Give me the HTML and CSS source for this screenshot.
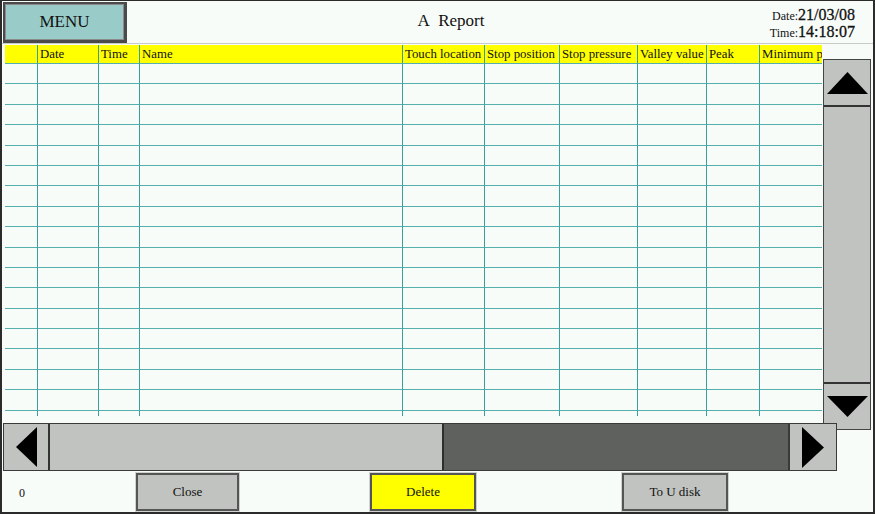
FILE: index.html
```html
<!DOCTYPE html>
<html lang="en">
<head>
    <meta charset="UTF-8">
    <title>A Report</title>

    <link rel="stylesheet" href="styles.css">
</head>
<body>
<div class="screen">
    <header class="top">
        <button class="menu">MENU</button>
        <div class="title">A&nbsp; Report</div>
        <div class="clock">
            <div><span class="lbl">Date:</span>21/03/08</div>
            <div><span class="lbl">Time:</span>14:18:07</div>
        </div>
    </header>

    <div class="middle">
        <div class="grid-wrap">
            <table class="report">
                <colgroup>
                    <col style="width:33px">
                    <col style="width:61px">
                    <col style="width:41px">
                    <col style="width:263px">
                    <col style="width:82px">
                    <col style="width:75px">
                    <col style="width:78px">
                    <col style="width:69px">
                    <col style="width:53px">
                    <col style="width:140px">
                </colgroup>
                <thead>
                <tr>
                    <th></th><th>Date</th><th>Time</th><th>Name</th><th>Touch location</th>
                    <th>Stop position</th><th>Stop pressure</th><th>Valley value</th><th>Peak</th>
                    <th>Minimum pressure</th>
                </tr>
                </thead>
                <tbody>
                <tr><td></td><td></td><td></td><td></td><td></td><td></td><td></td><td></td><td></td><td></td></tr>
                <tr><td></td><td></td><td></td><td></td><td></td><td></td><td></td><td></td><td></td><td></td></tr>
                <tr><td></td><td></td><td></td><td></td><td></td><td></td><td></td><td></td><td></td><td></td></tr>
                <tr><td></td><td></td><td></td><td></td><td></td><td></td><td></td><td></td><td></td><td></td></tr>
                <tr><td></td><td></td><td></td><td></td><td></td><td></td><td></td><td></td><td></td><td></td></tr>
                <tr><td></td><td></td><td></td><td></td><td></td><td></td><td></td><td></td><td></td><td></td></tr>
                <tr><td></td><td></td><td></td><td></td><td></td><td></td><td></td><td></td><td></td><td></td></tr>
                <tr><td></td><td></td><td></td><td></td><td></td><td></td><td></td><td></td><td></td><td></td></tr>
                <tr><td></td><td></td><td></td><td></td><td></td><td></td><td></td><td></td><td></td><td></td></tr>
                <tr><td></td><td></td><td></td><td></td><td></td><td></td><td></td><td></td><td></td><td></td></tr>
                <tr><td></td><td></td><td></td><td></td><td></td><td></td><td></td><td></td><td></td><td></td></tr>
                <tr><td></td><td></td><td></td><td></td><td></td><td></td><td></td><td></td><td></td><td></td></tr>
                <tr><td></td><td></td><td></td><td></td><td></td><td></td><td></td><td></td><td></td><td></td></tr>
                <tr><td></td><td></td><td></td><td></td><td></td><td></td><td></td><td></td><td></td><td></td></tr>
                <tr><td></td><td></td><td></td><td></td><td></td><td></td><td></td><td></td><td></td><td></td></tr>
                <tr><td></td><td></td><td></td><td></td><td></td><td></td><td></td><td></td><td></td><td></td></tr>
                <tr><td></td><td></td><td></td><td></td><td></td><td></td><td></td><td></td><td></td><td></td></tr>
                <tr><td></td><td></td><td></td><td></td><td></td><td></td><td></td><td></td><td></td><td></td></tr>
                </tbody>
            </table>
        </div>

        <div class="vscroll">
            <div class="sbtn up">
                <svg width="41" height="22" viewBox="0 0 41 22"><polygon points="20.5,0 41,22 0,22"/></svg>
            </div>
            <div class="vtrack"></div>
            <div class="sbtn down">
                <svg width="41" height="21" viewBox="0 0 41 21"><polygon points="0,0 41,0 20.5,21"/></svg>
            </div>
        </div>
    </div>

    <div class="hscroll">
        <div class="sbtn left">
            <svg width="21" height="40" viewBox="0 0 21 40"><polygon points="21,0 21,40 0,20"/></svg>
        </div>
        <div class="thumb"></div>
        <div class="htrack"></div>
        <div class="sbtn right">
            <svg width="22" height="41" viewBox="0 0 22 41"><polygon points="0,0 22,20.5 0,41"/></svg>
        </div>
    </div>

    <footer class="bottom">
        <span class="count">0</span>
        <button class="key close">Close</button>
        <button class="key delete">Delete</button>
        <button class="key export">To U disk</button>
    </footer>
</div>
</body>
</html>
```

FILE: styles.css
```css
body {
    margin: 0;
    background: #f8fcf9;
    font-family: "Liberation Serif", "Times New Roman", serif;
    color: #111;
}

.screen {
    width: 875px;
    height: 514px;
    box-sizing: border-box;
    border-style: solid;
    border-color: #2b2b2b;
    border-width: 1px 2px 2px 2px;
    background: #f8fcf9;
    overflow: hidden;
}

/*Шапка*/

.top {
    display: flex;
    height: 42px;
    border-bottom: 1px solid #c9cbc9;
}

.menu {
    width: 124px;
    height: 41px;
    margin: 1px 0 0 1px;
    padding: 0;
    background: #99ccc8;
    border: 2px solid #4b4b4b;
    border-right-width: 3px;
    border-bottom-width: 3px;
    box-shadow: inset 0 0 0 1px #8a8a8a;
    font-family: inherit;
    font-size: 17px;
    color: #111;
}

.title {
    flex: 1;
    text-align: center;
    font-size: 17px;
    line-height: 40px;
    padding-left: 5px;
}

.clock {
    padding: 6px 18px 0 0;
    text-align: right;
    font-size: 16px;
    line-height: 16px;
    -webkit-text-stroke: 0.3px #111;
}

.lbl {
    font-size: 12px;
    -webkit-text-stroke: 0;
}

/*Таблица*/

.middle {
    display: flex;
    height: 386px;
}

.grid-wrap {
    width: 817px;
    height: 371px;
    margin: 1px 0 0 3px;
    overflow: hidden;
}

.report {
    table-layout: fixed;
    width: 895px;
    border-spacing: 0;
}

.report th, .report td {
    box-sizing: border-box;
    padding: 0 0 0 2px;
    border-right: 1px solid #3a9e9b;
    border-bottom: 1px solid #55b0ad;
    white-space: nowrap;
    overflow: hidden;
    text-align: left;
}

.report th {
    height: 19px;
    padding-top: 1px;
    background: #ffff00;
    font-weight: normal;
    font-size: 12.8px;
    line-height: 17px;
}

.report td {
    height: 20.4px;
}

/*Прокрутка*/

.sbtn {
    display: flex;
    align-items: center;
    justify-content: center;
    background: #c0c3bf;
}

.sbtn svg {
    fill: #000;
}

.vscroll {
    display: flex;
    flex-direction: column;
    width: 48px;
    height: 371px;
    box-sizing: border-box;
    margin: 15px 0 0 1px;
    border: 1px solid #444;
    background: #c0c3bf;
}

.up, .down {
    height: 45px;
}

.up {
    border-bottom: 2px solid #333;
}

.down {
    border-top: 2px solid #333;
}

.vtrack {
    flex: 1;
}

.hscroll {
    position: relative;
    display: flex;
    width: 834px;
    height: 48px;
    box-sizing: border-box;
    margin: -7px 0 0 1px;
    border: 1px solid #3a3a3a;
}

.left {
    width: 44px;
    border-right: 2px solid #333;
}

.thumb {
    width: 392px;
    background: #c0c3bf;
    border-right: 2px solid #2e2e2e;
}

.htrack {
    flex: 1;
    background: #5f615e;
}

.right {
    width: 46px;
    border-left: 2px solid #3a3a3a;
}

/*Кнопки*/

.bottom {
    display: flex;
    align-items: center;
    height: 41px;
}

.count {
    width: 134px;
    padding-left: 17px;
    box-sizing: border-box;
    font-size: 12px;
    margin-top: 4px;
    color: #111;
}

.key {
    height: 38px;
    padding: 0;
    border: 2px solid #555;
    box-shadow: 0 0 0 1px #cfd1cf;
    background: #c0c3bf;
    font-family: inherit;
    font-size: 13px;
    color: #111;
}

.close {
    width: 103px;
}

.delete {
    width: 106px;
    margin-left: 131px;
    background: #ffff00;
}

.export {
    width: 106px;
    margin-left: 146px;
}
```
